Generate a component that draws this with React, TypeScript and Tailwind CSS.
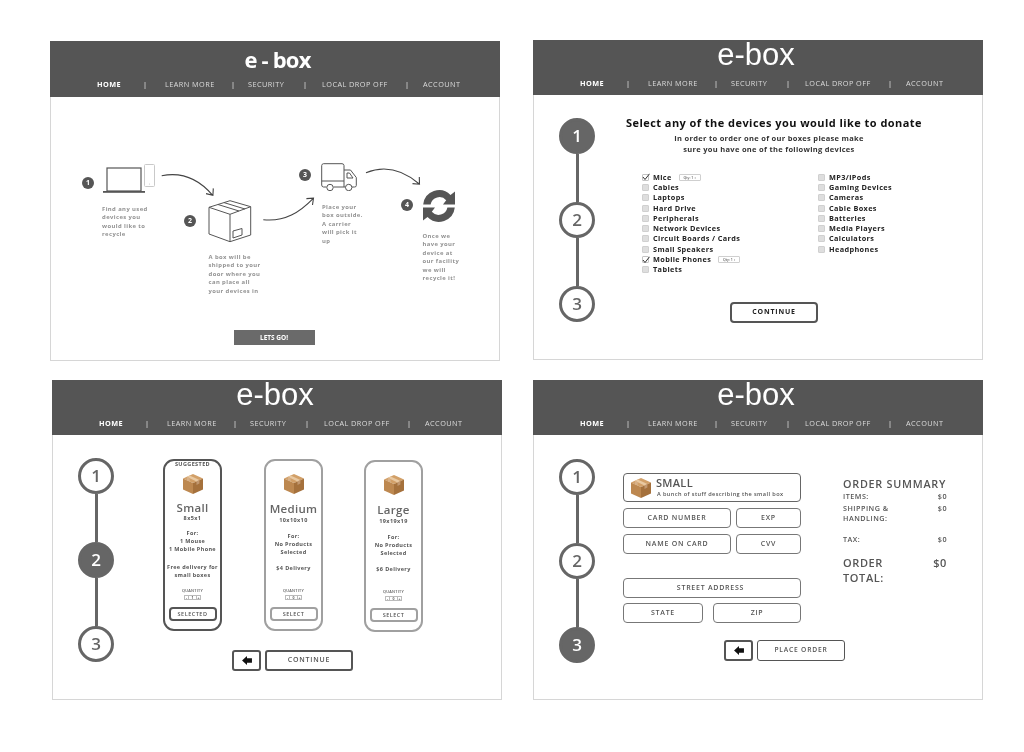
import type { ReactNode } from "react";

const NAV_ITEMS = [
  { label: "LEARN MORE", w: "w-[66px]", bar: "w-[22px]" },
  { label: "SECURITY", w: "w-[55px]", bar: "w-[17px]" },
  { label: "LOCAL DROP OFF", w: "w-[83px]", bar: "w-[19px]" },
  { label: "ACCOUNT", w: "w-[50px]", bar: "w-[18px]" },
];

function Header({ bold, tall }: { bold?: boolean; tall?: boolean }) {
  return (
    <div className={`flex shrink-0 flex-col bg-[#555555] ${tall ? "h-[56px]" : "h-[55px]"}`}>
      {bold ? (
        <div className="flex h-[35px] items-center justify-center pl-[5px] text-[22px] leading-none font-bold tracking-[-0.8px] text-white">
          e - box
        </div>
      ) : (
        <div className="flex h-[29px] items-center justify-center pr-[4px] font-['Liberation_Sans',sans-serif] text-[31px] leading-none text-white">
          e-box
        </div>
      )}
      <div className={`flex h-[14px] items-center pl-[47px] text-[7.3px] tracking-[0.45px] text-[#dddddd] ${bold ? "mt-[1px]" : "mt-[7px]"}`}>
        <span className="w-[46px] font-bold text-white">HOME</span>
        {NAV_ITEMS.map((item) => (
          <span key={item.label} className="flex items-center">
            <span className={`${item.bar} font-semibold`}>|</span>
            <span className={`${item.w} whitespace-nowrap`}>{item.label}</span>
          </span>
        ))}
      </div>
    </div>
  );
}

function Panel({ children, bold, tall, className }: { children: ReactNode; bold?: boolean; tall?: boolean; className?: string }) {
  return (
    <div className={`flex h-[320px] w-[450px] flex-col ${className ?? ""}`}>
      <Header bold={bold} tall={tall} />
      <div className="min-h-0 flex-1 border border-t-0 border-[#d6d6d6]">{children}</div>
    </div>
  );
}

function Steps({ active, className }: { active: number; className: string }) {
  return (
    <div className={`flex w-[36px] shrink-0 flex-col items-center ${className}`}>
      {[1, 2, 3].map((n) => (
        <div key={n} className="flex flex-col items-center">
          {n > 1 && <div className="h-[48px] w-[3px] bg-[#666666]" />}
          <div
            className={`flex size-[36px] items-center justify-center rounded-full border-[3px] border-[#666666] text-[17px] font-semibold ${
              n === active ? "bg-[#666666] text-white" : "bg-white text-[#666666]"
            }`}
          >
            {n}
          </div>
        </div>
      ))}
    </div>
  );
}

function BoxIcon({ className }: { className: string }) {
  return (
    <svg viewBox="0 0 20 20" className={className}>
      <path d="M10 0 20 4.5 10 9 0 4.5Z" fill="#d2a068" />
      <path d="M0 4.5 10 9V20L0 15.5Z" fill="#bd8850" />
      <path d="M20 4.5 10 9V20L20 15.5Z" fill="#a5713c" />
      <path d="M3.8 2.8 6.6 1.5 16.4 6 13.5 7.4Z" fill="#e9c9a2" />
      <path d="M3.8 2.8V6.2L6.7 7.5V4.1Z" fill="#d8b188" />
      <path d="M13.5 7.4V10.9L16.4 9.6V6Z" fill="#c29870" />
    </svg>
  );
}

function BackButton() {
  return (
    <div className="flex h-[21px] w-[29px] items-center justify-center rounded-[3px] border-2 border-[#555555]">
      <svg viewBox="0 0 11 10" className="h-[9px] w-[10px]">
        <path d="M0 5 5.5 0V2.5H11V7.5H5.5V10Z" fill="#111111" />
      </svg>
    </div>
  );
}

function Field({ label, className }: { label: string; className: string }) {
  return (
    <div className={`flex items-center justify-center rounded-[4px] border-[1.5px] border-[#777777] text-[7px] font-semibold tracking-[0.75px] text-[#555555] ${className}`}>
      {label}
    </div>
  );
}

function Badge({ n, className }: { n: number; className: string }) {
  return (
    <div className={`absolute flex size-[12px] items-center justify-center rounded-full bg-[#555555] text-[7px] font-bold text-white ${className}`}>
      {n}
    </div>
  );
}

function Note({ text, className }: { text: string; className: string }) {
  return (
    <div className={`absolute text-[5.9px] leading-[8.45px] font-bold tracking-[0.4px] whitespace-pre-line text-[#929292] ${className}`}>
      {text}
    </div>
  );
}

function HowItWorks() {
  return (
    <Panel bold tall className="mt-px">
      <div className="relative flex h-full flex-col items-center justify-end pr-[2px] pb-[15px]">
        <Badge n={1} className="top-[80px] left-[31px]" />
        <svg viewBox="0 0 52 29" className="absolute top-[67px] left-[52px] h-[29px] w-[52px]" fill="none">
          <rect x="41.5" y="0.5" width="10" height="22" rx="1" stroke="#c9c9c9" />
          <circle cx="46.5" cy="20" r="0.6" fill="#c9c9c9" />
          <rect x="4" y="4" width="34" height="23" stroke="#555555" strokeWidth="1.2" />
          <rect x="0" y="27" width="42" height="1.8" fill="#555555" />
        </svg>
        <Note text={"Find any used\ndevices you\nwould like to\nrecycle"} className="top-[108px] left-[51px]" />

        <Badge n={2} className="top-[118px] left-[133px]" />
        <svg viewBox="0 0 44 44" className="absolute top-[103px] left-[157px] size-[44px]" fill="none" stroke="#555555" strokeWidth="1" strokeLinejoin="round">
          <path d="M22 .7 42.7 6.7V35L22 41.7 1 34V7.3Z" />
          <path d="M1 7.3 22 14.3 42.7 6.7M22 14.3V41.7" />
          <path d="M10 4.5 31 11M16 2.6 37 9" />
          <path d="M25 31 34 28.5V35L25 38Z" />
        </svg>
        <Note text={"A box will be\nshipped to your\ndoor where you\ncan place all\nyour devices in"} className="top-[156px] left-[157.5px]" />

        <Badge n={3} className="top-[72px] left-[248px]" />
        <svg viewBox="0 0 36 28" className="absolute top-[66px] left-[270px] h-[28px] w-[36px]" fill="none" stroke="#555555" strokeWidth="1">
          <path d="M5.5 24H2.5A2 2 0 0 1 .7 22V2.5A2 2 0 0 1 2.5 .7H21A2 2 0 0 1 23 2.5V24H12.5" />
          <path d="M.7 18H23" />
          <path d="M23 7H29.5L35.3 14.5V22.5Q35.3 24 33.5 24H31" />
          <path d="M26 10H28.5L32 15H26Z" />
          <path d="M23 24H24.5" />
          <circle cx="9" cy="24.5" r="3.2" />
          <circle cx="27.7" cy="24.5" r="3.2" />
        </svg>
        <Note text={"Place your\nbox outside.\nA carrier\nwill pick it\nup"} className="top-[106px] left-[271px]" />

        <Badge n={4} className="top-[102px] left-[350px]" />
        <svg viewBox="0 0 32 32" className="absolute top-[93px] left-[372px] size-[32px]" fill="#555555">
          <path d="M.2 14.5A16 16 0 0 1 27.5 5L32 1.5V14.5H20L23.2 10.2A9 9 0 0 0 7.6 14.5Z" />
          <path d="M31.8 17.5A16 16 0 0 1 4.5 27L0 30.5V17.5H12L8.8 21.8A9 9 0 0 0 24.4 17.5Z" />
        </svg>
        <Note text={"Once we\nhave your\ndevice at\nour facility\nwe will\nrecycle it!"} className="top-[135px] left-[371.5px]" />

        <svg viewBox="51 97 447 263" className="absolute top-0 left-0 h-[263px] w-[447px]" fill="none" stroke="#444444" strokeWidth="1.1">
          <path d="M161.7 175.7C180 172 198 178 212.7 195.3M206 193.6 212.9 195.4 213.3 188.4" />
          <path d="M263.3 219.7C285 222 300 212 313.3 198.3M306.4 198.6 313.5 198.2 312.5 205" />
          <path d="M366 172.7C385 165 403 170 419.3 184M412.5 183.6 419.5 184.2 419.3 177" />
        </svg>

        <div className="flex h-[15px] w-[81px] items-center justify-center bg-[#6a6a6a] text-[6.5px] font-bold text-white">LETS GO!</div>
      </div>
    </Panel>
  );
}

function DeviceRow({ label, qty }: { label: string; qty?: boolean }) {
  return (
    <div className="flex h-[10.3px] items-center text-[7.3px] font-bold tracking-[0.38px] whitespace-nowrap text-[#222222]">
      {qty ? (
        <span className="flex size-[7px] items-center justify-center rounded-[1px] border border-[#c4c4c4] bg-white">
          <svg viewBox="0 0 8 8" className="size-[8px] shrink-0" fill="none" stroke="#333333" strokeWidth="1">
            <path d="M1 4 3 6.5 7.5 .8" />
          </svg>
        </span>
      ) : (
        <span className="size-[7px] rounded-[1px] border border-[#d0d0d0] bg-[#dedede]" />
      )}
      <span className="ml-[4px]">{label}</span>
      {qty && (
        <span className="ml-[7px] flex h-[7px] w-[22px] items-center justify-center rounded-[1px] border border-[#cfcfcf] text-[3.5px] font-semibold tracking-normal text-[#666666]">
          Qty: 1 ↕
        </span>
      )}
    </div>
  );
}

const LEFT_DEVICES = ["Mice", "Cables", "Laptops", "Hard Drive", "Peripherals", "Network Devices", "Circuit Boards / Cards", "Small Speakers", "Mobile Phones", "Tablets"];
const RIGHT_DEVICES = ["MP3/iPods", "Gaming Devices", "Cameras", "Cable Boxes", "Batteries", "Media Players", "Calculators", "Headphones"];

function SelectDevices() {
  return (
    <Panel>
      <div className="flex h-full">
        <Steps active={1} className="mt-[23px] ml-[25px]" />
        <div className="ml-[25px] flex w-[308px] shrink-0 flex-col pt-[20px]">
          <h1 className="text-center text-[11px] leading-[16px] font-bold tracking-[0.45px] whitespace-nowrap text-[#111111]">
            Select any of the devices you would like to donate
          </h1>
          <p className="mt-[2px] pr-[10px] text-center text-[7.5px] leading-[10.5px] font-bold tracking-[0.3px] text-[#333333]">
            In order to order one of our boxes please make
            <br />
            sure you have one of the following devices
          </p>
          <div className="mt-[18px] ml-[22px] flex">
            <div className="w-[176px] shrink-0">
              {LEFT_DEVICES.map((d) => (
                <DeviceRow key={d} label={d} qty={d === "Mice" || d === "Mobile Phones"} />
              ))}
            </div>
            <div>
              {RIGHT_DEVICES.map((d) => (
                <DeviceRow key={d} label={d} />
              ))}
            </div>
          </div>
          <div className="mt-[27px] flex h-[21px] w-[88px] items-center justify-center self-center rounded-[4px] border-2 border-[#555555] text-[7px] font-bold tracking-[0.8px] text-[#222222]">
            CONTINUE
          </div>
        </div>
      </div>
    </Panel>
  );
}

type BoxCard = { title: string; dims: string; lines: string[]; delivery: string[]; qty: string; selected?: boolean };

const BOXES: BoxCard[] = [
  { title: "Small", dims: "8x5x1", lines: ["For:", "1 Mouse", "1 Mobile Phone"], delivery: ["Free delivery for", "small boxes"], qty: "1", selected: true },
  { title: "Medium", dims: "10x10x10", lines: ["For:", "No Products", "Selected"], delivery: ["$4 Delivery"], qty: "0" },
  { title: "Large", dims: "19x19x19", lines: ["For:", "No Products", "Selected"], delivery: ["$6 Delivery"], qty: "0" },
];

function SizeCard({ box, className }: { box: BoxCard; className: string }) {
  return (
    <div
      className={`flex h-[172px] w-[59px] shrink-0 flex-col items-center rounded-[11px] border-2 pb-[8px] text-[#555555] ${
        box.selected ? "border-[#555555]" : "border-[#a0a0a0]"
      } ${className}`}
    >
      <div className="h-[7px] text-[5.5px] leading-[7px] font-bold tracking-[0.4px]">{box.selected ? "SUGGESTED" : ""}</div>
      <BoxIcon className="mt-[6px] size-[20px] shrink-0" />
      <div className={`h-[14px] text-[11.5px] leading-[14px] font-semibold tracking-[0.3px] whitespace-nowrap text-[#666666] ${box.selected ? "mt-[7px]" : "mt-[8px]"}`}>
        {box.title}
      </div>
      <div className={`text-[5.5px] leading-[7px] font-bold tracking-[0.4px] ${box.selected ? "" : "mt-[1px]"}`}>{box.dims}</div>
      <div className={`text-center text-[5.5px] leading-[7.8px] font-bold tracking-[0.35px] whitespace-nowrap ${box.selected ? "mt-[8px]" : "mt-[9px]"}`}>
        {box.lines.map((l) => (
          <div key={l}>{l}</div>
        ))}
      </div>
      <div className={`text-center text-[5.5px] leading-[7.8px] font-bold tracking-[0.35px] whitespace-nowrap ${box.selected ? "mt-[11px]" : "mt-[9px]"}`}>
        {box.delivery.map((l) => (
          <div key={l}>{l}</div>
        ))}
      </div>
      <div className="mt-auto text-[3.8px] leading-[5px] font-semibold tracking-[0.25px]">QUANTITY</div>
      <div className="mt-[2px] flex h-[5px] text-[3.5px] leading-[4px] font-bold text-[#666666]">
        <span className="w-[5px] border border-[#bbbbbb] text-center leading-[3px]">-</span>
        <span className="w-[7px] border-y border-[#bbbbbb] text-center leading-[3px]">{box.qty}</span>
        <span className="w-[5px] border border-[#bbbbbb] text-center leading-[3px]">+</span>
      </div>
      <div
        className={`mt-[7px] flex h-[14px] w-[48px] shrink-0 items-center justify-center rounded-[4px] border-2 text-[5.5px] font-semibold tracking-[0.5px] ${
          box.selected ? "border-[#555555]" : "border-[#a0a0a0]"
        }`}
      >
        {box.selected ? "SELECTED" : "SELECT"}
      </div>
    </div>
  );
}

function ChooseBox() {
  return (
    <Panel className="ml-[2px]">
      <div className="flex h-full">
        <Steps active={2} className="mt-[23px] ml-[25px]" />
        <div className="mt-[24px] ml-[49px]">
          <div className="flex items-start">
            <SizeCard box={BOXES[0]} className="" />
            <SizeCard box={BOXES[1]} className="ml-[42px]" />
            <SizeCard box={BOXES[2]} className="mt-px ml-[41px]" />
          </div>
          <div className="mt-[18px] ml-[69px] flex gap-[4px]">
            <BackButton />
            <div className="flex h-[21px] w-[88px] items-center justify-center rounded-[3px] border-2 border-[#555555] text-[7px] font-semibold tracking-[0.8px] text-[#555555]">
              CONTINUE
            </div>
          </div>
        </div>
      </div>
    </Panel>
  );
}

function SummaryRow({ label, price }: { label: ReactNode; price: string }) {
  return (
    <div className="flex justify-between text-[7.2px] leading-[10.2px] font-semibold tracking-[0.5px] text-[#555555]">
      <span>{label}</span>
      <span>{price}</span>
    </div>
  );
}

function Checkout() {
  return (
    <Panel>
      <div className="flex h-full">
        <Steps active={3} className="mt-[24px] ml-[25px]" />
        <div className="mt-[38px] ml-[28px] flex w-[178px] shrink-0 flex-col">
          <div className="flex h-[29px] items-center rounded-[4px] border-[1.5px] border-[#666666] pl-[7px]">
            <BoxIcon className="size-[20px] shrink-0" />
            <div className="ml-[5px] text-[#555555]">
              <div className="text-[11px] leading-[12px] font-semibold tracking-[0.3px]">SMALL</div>
              <div className="mt-[1px] ml-[1px] text-[5.6px] leading-[8px] font-semibold tracking-[0.4px] whitespace-nowrap">
                A bunch of stuff describing the small box
              </div>
            </div>
          </div>
          <div className="mt-[6px] flex justify-between">
            <Field label="CARD NUMBER" className="h-[20px] w-[108px]" />
            <Field label="EXP" className="h-[20px] w-[65px]" />
          </div>
          <div className="mt-[6px] flex justify-between">
            <Field label="NAME ON CARD" className="h-[20px] w-[108px]" />
            <Field label="CVV" className="h-[20px] w-[65px]" />
          </div>
          <Field label="STREET ADDRESS" className="mt-[24px] h-[20px] w-[178px] pr-[3px]" />
          <div className="mt-[5px] flex justify-between">
            <Field label="STATE" className="h-[20px] w-[80px]" />
            <Field label="ZIP" className="h-[20px] w-[88px]" />
          </div>
          <div className="mt-[17px] ml-[101px] flex w-max gap-[4px]">
            <BackButton />
            <div className="flex h-[21px] w-[88px] items-center justify-center rounded-[3px] border-[1.5px] border-[#555555] text-[6.7px] font-semibold tracking-[0.8px] text-[#555555]">
              PLACE ORDER
            </div>
          </div>
        </div>
        <div className="mt-[42px] ml-[42px] w-[104px] shrink-0 text-[#555555]">
          <div className="text-[10.8px] leading-[14px] font-semibold tracking-[0.75px] whitespace-nowrap">ORDER SUMMARY</div>
          <SummaryRow label="ITEMS:" price="$0" />
          <div className="mt-[2px]">
            <SummaryRow
              label={
                <>
                  SHIPPING &amp;
                  <br />
                  HANDLING:
                </>
              }
              price="$0"
            />
          </div>
          <div className="mt-[10px]">
            <SummaryRow label="TAX:" price="$0" />
          </div>
          <div className="mt-[11px] flex justify-between text-[11px] leading-[15.5px] font-semibold tracking-[0.6px]">
            <span>
              ORDER
              <br />
              TOTAL:
            </span>
            <span>$0</span>
          </div>
        </div>
      </div>
    </Panel>
  );
}

export default function App() {
  return (
    <div className="h-[752px] w-[1024px] overflow-hidden bg-white pt-[40px] pl-[50px] font-['Open_Sans',sans-serif]">
      {/* own layer, so the tiny text gets grey antialiasing like the reference */}
      <div className="grid grid-cols-[483px_450px] grid-rows-[321px_320px] gap-y-[19px] will-change-transform">
        <HowItWorks />
        <SelectDevices />
        <ChooseBox />
        <Checkout />
      </div>
    </div>
  );
}
